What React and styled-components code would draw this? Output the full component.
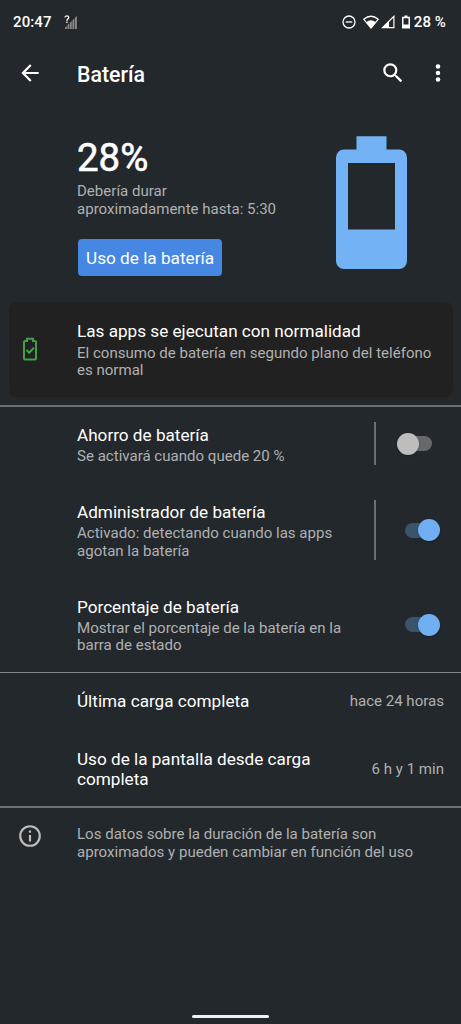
import React, { useState } from 'react';
import styled, { createGlobalStyle } from 'styled-components';

const GlobalStyle = createGlobalStyle`
  html, body {
    margin: 0;
    background: #23282c;
  }

  *, *::before, *::after {
    box-sizing: border-box;
  }
`;

const ScreenSC = styled.div`
  width: 461px;
  height: 1024px;
  display: flex;
  flex-direction: column;
  overflow: hidden;
  background: #23282c;
  color: #fff;
  font-family: Roboto, "Liberation Sans", sans-serif;
`;

const StatusBarSC = styled.header`
  height: 44px;
  flex: none;
  display: flex;
  align-items: center;
  padding: 0 15px 0 13px;
  font-size: 15px;
  font-weight: 500;
  letter-spacing: 0.1px;

  .signal {
    margin-left: 12px;
  }

  .icons {
    display: flex;
    align-items: center;
    margin-left: auto;
    margin-right: 4px;
  }

  .wifi {
    margin: 0 2px 0 7px;
  }

  .battery {
    margin-left: 7px;
  }
`;

const AppBarSC = styled.div`
  height: 60px;
  flex: none;
  display: flex;
  align-items: center;
  padding: 0 10.5px 0 17px;

  h1 {
    flex: 1;
    margin: 0 0 0 34px;
    font-size: 21.3px;
    font-weight: 500;
  }
`;

const IconButtonSC = styled.button`
  width: 26px;
  height: 26px;
  padding: 0;
  border: 0;
  background: none;
  color: #fff;
  display: flex;
  margin-bottom: 2px;
  margin-left: ${(props) => props.$gap || 0}px;

  svg {
    width: 100%;
    height: 100%;
  }
`;

const SummarySC = styled.section`
  height: 198px;
  flex: none;
  display: flex;
  justify-content: space-between;
  padding: 31px 54px 0 77px;

  > svg {
    margin-top: 1px;
  }
`;

const LevelSC = styled.div`
  font-size: 38.4px;
  line-height: 45px;
  font-weight: 400;
  -webkit-text-stroke: 0.6px #fff;
  margin-bottom: 3px;
`;

const UsageButtonSC = styled.button`
  height: 37px;
  margin: 21px 0 0 1px;
  padding: 1px 8px 0;
  border: 0;
  border-radius: 4px;
  background: #4587e2;
  color: #fff;
  font: 400 17.2px/36px Roboto, "Liberation Sans", sans-serif;
`;

const SubtitleSC = styled.div`
  color: #afb1b2;
  font-size: 15.05px;
  line-height: 17.5px;
  white-space: pre-line;
`;

const TitleSC = styled.div`
  font-size: 17.15px;
  line-height: 20px;
  margin-bottom: ${(props) => props.$gap || 0}px;
  white-space: pre-line;
`;

const TipCardSC = styled.section`
  height: 95px;
  flex: none;
  margin: 0 8px 8px 9px;
  padding: 2px 0 0 10px;
  display: flex;
  align-items: center;
  border-radius: 8px;
  background: #212121;

  svg {
    margin-right: 36px;
    margin-bottom: 3px;
  }
`;

const GroupSC = styled.section`
  flex: none;
  height: ${(props) => props.$height}px;
  border-top: ${(props) => (props.$thin ? '1px solid #85888a' : '2px solid #6d7173')};
`;

const RowSC = styled.div`
  height: ${(props) => props.$height}px;
  display: flex;
  align-items: center;
  padding: 0 17px 0 77px;

  .text {
    flex: 1;
  }

  .pair {
    padding-top: 2.4px;
  }

  &:first-child .pair {
    padding-top: 3.4px;
  }
`;

const ValueSC = styled.div`
  color: #afb1b2;
  font-size: 15.05px;
`;

const SeparatorSC = styled.div`
  width: 2px;
  height: ${(props) => props.$height}px;
  margin-right: 22px;
  background: #6d7173;
`;

const SwitchSC = styled.button`
  width: 46px;
  height: 24px;
  padding: 0 12px 0 0;
  border: 0;
  background: none;
  display: flex;
  align-items: center;
  justify-content: flex-end;

  .track {
    width: 27px;
    height: 15px;
    flex: none;
    border-radius: 8px;
    display: flex;
    align-items: center;
    justify-content: ${(props) => (props.$on ? 'flex-end' : 'flex-start')};
    background: ${(props) => (props.$on ? '#3b546c' : '#65696c')};
  }

  .thumb {
    width: 22px;
    height: 22px;
    flex: none;
    margin: 0 -8px;
    border-radius: 50%;
    background: ${(props) => (props.$on ? '#71aff3' : '#bdbdbd')};
    box-shadow: 0 1px 2px rgba(0, 0, 0, .3);
  }
`;

const FooterSC = styled.footer`
  display: flex;
  padding: 15px 17px 0;

  svg {
    flex: none;
    margin-right: 34px;
  }

  .note {
    padding-top: 3px;
  }
`;

const HomeBarSC = styled.div`
  width: 77px;
  height: 3px;
  flex: none;
  margin: auto auto 6px;
  border-radius: 2px;
  background: #f1f1f1;
`;

const SignalIcon = () => (
  <svg className="signal" width="15" height="16" viewBox="0 0 15 16">
    <path d="M1 15v-1.500l1.800-1.500v3zM3.400 15v-4l1.900-1.700V15zM5.900 15V8.800l1.900-1.700V15zM8.400 15V6.500l1.900-1.900V15zM10.900 15V4.100L12.900 2v13z" fill="#85888a" />
    <path d="M1 3.600C1 1.300 4.700 1.300 4.700 3.400C4.700 4.900 2.900 5 2.900 6.700M2.900 7.600v1.400" fill="none" stroke="#fff" strokeWidth="1.300" />
  </svg>
);

const DndIcon = () => (
  <svg width="14" height="14" viewBox="0 0 14 14" fill="none" stroke="#fff" strokeWidth="1.3">
    <circle cx="7" cy="7" r="6" />
    <path d="M3.700 7h6.600" />
  </svg>
);

const WifiIcon = () => (
  <svg className="wifi" width="16" height="14" viewBox="0 0 16 14">
    <path d="M.8 4.300Q8-1.800 15.200 4.300L8 12.900z" fill="none" stroke="#fff" strokeWidth="1.300" />
    <path d="M3.200 7.200Q8 3.400 12.800 7.200L8 13z" fill="#fff" />
  </svg>
);

const CellIcon = () => (
  <svg width="14" height="14" viewBox="0 0 14 14">
    <path d="M1.500 12.700L12.900 1.300v11.400z" fill="none" stroke="#fff" strokeWidth="1.200" />
    <path d="M1 13L8 6v7z" fill="#fff" />
  </svg>
);

const SmallBatteryIcon = () => (
  <svg className="battery" width="8" height="14" viewBox="0 0 8 14">
    <path d="M2.500 0.500h3v1.200H8V13.500H0V1.700h2.500zM1.500 3.200v6.300h5V3.200z" fill="#fff" fillRule="evenodd" />
  </svg>
);

const BigBattery = () => (
  <svg width="71" height="133" viewBox="0 0 71 133">
    <path
      fill="#73b2f5"
      fillRule="evenodd"
      d="M20.500 0.300h30v13.200H63a8 8 0 0 1 8 8V125a8 8 0 0 1-8 8H8a8 8 0 0 1-8-8V21.500a8 8 0 0 1 8-8h12.500zM12 27v66.500h47V27z"
    />
  </svg>
);

const BatteryOkIcon = () => (
  <svg width="22" height="24" viewBox="0 0 22 24" fill="none" stroke="#43a047" strokeWidth="2">
    <path d="M8 1.700h6v2.300h2q1 0 1 1v16.500q0 1-1 1h-10q-1 0-1-1V5q0-1 1-1H8z" />
    <path d="M7.500 13l2.700 2.700 4.700-5" />
  </svg>
);

const Switch = ({ on, onClick }) => (
  <SwitchSC $on={on} onClick={onClick} role="switch" aria-checked={on}>
    <span className="track"><span className="thumb" /></span>
  </SwitchSC>
);

const settings = [
  {
    title: 'Ahorro de batería', subtitle: 'Se activará cuando quede 20 %', height: 73, separator: 43,
  },
  {
    title: 'Administrador de batería', subtitle: 'Activado: detectando cuando las apps\nagotan la batería', height: 100, separator: 60,
  },
  {
    title: 'Porcentaje de batería', subtitle: 'Mostrar el porcentaje de la batería en la\nbarra de estado', height: 89,
  },
];

const App = () => {
  const [enabled, setEnabled] = useState([false, true, true]);

  const toggle = (index) => {
    setEnabled(enabled.map((on, i) => (i === index ? !on : on)));
  };

  return (
    <ScreenSC>
      <GlobalStyle />
      <StatusBarSC>
        <span>20:47</span>
        <SignalIcon />
        <div className="icons">
          <DndIcon />
          <WifiIcon />
          <CellIcon />
          <SmallBatteryIcon />
        </div>
        <span>28 %</span>
      </StatusBarSC>
      <AppBarSC>
        <IconButtonSC>
          <svg viewBox="0 0 24 24" fill="currentColor">
            <path d="M20 11H7.830l5.590-5.590L12 4l-8 8 8 8 1.410-1.410L7.830 13H20z" />
          </svg>
        </IconButtonSC>
        <h1>Batería</h1>
        <IconButtonSC>
          <svg viewBox="0 0 24 24" fill="currentColor">
            <path d="M15.500 14h-.79l-.28-.27A6.471 6.471 0 0 0 16 9.500 6.500 6.500 0 1 0 9.500 16c1.610 0 3.090-.59 4.230-1.570l.27.28v.79l5 4.990L20.490 19zm-6 0A4.500 4.500 0 1 1 14 9.500 4.490 4.490 0 0 1 9.500 14z" />
          </svg>
        </IconButtonSC>
        <IconButtonSC $gap={19}>
          <svg viewBox="0 0 24 24" fill="currentColor">
            <circle cx="12" cy="6" r="2.1" />
            <circle cx="12" cy="12" r="2.1" />
            <circle cx="12" cy="18" r="2.1" />
          </svg>
        </IconButtonSC>
      </AppBarSC>
      <SummarySC>
        <div>
          <LevelSC>28%</LevelSC>
          <SubtitleSC>{'Debería durar\naproximadamente hasta: 5:30'}</SubtitleSC>
          <UsageButtonSC>Uso de la batería</UsageButtonSC>
        </div>
        <BigBattery />
      </SummarySC>
      <TipCardSC>
        <BatteryOkIcon />
        <div>
          <TitleSC $gap={3.5}>Las apps se ejecutan con normalidad</TitleSC>
          <SubtitleSC>{'El consumo de batería en segundo plano del teléfono\nes normal'}</SubtitleSC>
        </div>
      </TipCardSC>
      <GroupSC $height={267}>
        {settings.map((item, index) => (
          <RowSC key={item.title} $height={item.height}>
            <div className="text pair">
              <TitleSC $gap={3}>{item.title}</TitleSC>
              <SubtitleSC>{item.subtitle}</SubtitleSC>
            </div>
            {item.separator && <SeparatorSC $height={item.separator} />}
            <Switch on={enabled[index]} onClick={() => toggle(index)} />
          </RowSC>
        ))}
      </GroupSC>
      <GroupSC $height={134} $thin>
        <RowSC $height={56}>
          <TitleSC className="text">Última carga completa</TitleSC>
          <ValueSC>hace 24 horas</ValueSC>
        </RowSC>
        <RowSC $height={79}>
          <TitleSC className="text">{'Uso de la pantalla desde carga\ncompleta'}</TitleSC>
          <ValueSC>6 h y 1 min</ValueSC>
        </RowSC>
      </GroupSC>
      <GroupSC $height={80}>
        <FooterSC>
          <svg width="26" height="26" viewBox="0 0 24 24" fill="#bdbebf">
            <path d="M11 7h2v2h-2zm0 4h2v6h-2zm1-9a10 10 0 1 0 0 20 10 10 0 0 0 0-20zm0 18a8 8 0 1 1 0-16 8 8 0 0 1 0 16z" />
          </svg>
          <SubtitleSC className="note">{'Los datos sobre la duración de la batería son\naproximados y pueden cambiar en función del uso'}</SubtitleSC>
        </FooterSC>
      </GroupSC>
      <HomeBarSC />
    </ScreenSC>
  );
};

export default App;
